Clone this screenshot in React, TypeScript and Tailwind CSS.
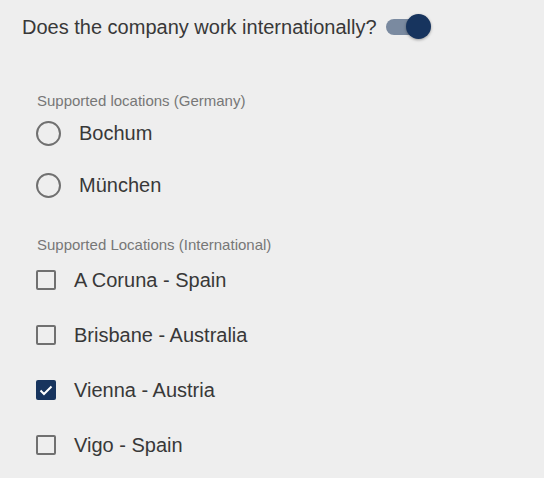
import { useState } from 'react'

const germany = ['Bochum', 'München']
const international = [
  { id: 'coruna', label: 'A Coruna - Spain' },
  { id: 'brisbane', label: 'Brisbane - Australia' },
  { id: 'vienna', label: 'Vienna - Austria' },
  { id: 'vigo', label: 'Vigo - Spain' },
]

function Radio({ checked }: { checked: boolean }) {
  return (
    <span className="flex h-[25px] w-[25px] items-center justify-center rounded-full border-2 border-[#707070]">
      {checked && <span className="h-3 w-3 rounded-full bg-[#17345e]" />}
    </span>
  )
}

function Checkbox({ checked }: { checked: boolean }) {
  if (checked) {
    return (
      <span className="flex h-[20px] w-[20px] items-center justify-center rounded-[2px] bg-[#17345e]">
        <svg viewBox="0 0 20 20" className="h-[20px] w-[20px]" fill="none" stroke="white" strokeWidth="2">
          <path d="M4.5 10.5L8 14l7.5-7.5" />
        </svg>
      </span>
    )
  }
  return <span className="block h-[20px] w-[20px] rounded-[2px] border-2 border-[#707070]" />
}

export default function App() {
  const [international_, setInternational] = useState(true)
  const [city, setCity] = useState<string | null>(null)
  const [selected, setSelected] = useState<string[]>(['vienna'])

  const toggle = (id: string) =>
    setSelected((s) => (s.includes(id) ? s.filter((x) => x !== id) : [...s, id]))

  return (
    <div className="min-h-[478px] bg-[#eeeeee] font-['Liberation_Sans',Arial,sans-serif] text-[#383838]">
      <div className="flex items-center gap-[9px] pl-[22px] pt-[14px]">
        <span className="text-[20px] leading-[26px]">Does the company work internationally?</span>
        <button
          onClick={() => setInternational(!international_)}
          className="relative h-[26px] w-[46px]"
        >
          <span className="absolute left-0 top-[5px] h-[16px] w-[34px] rounded-full bg-[#7a8aa0]" />
          <span
            className={
              'absolute top-0 h-[25px] w-[25px] rounded-full bg-[#17345e] shadow-[0_1px_3px_rgba(0,0,0,0.35)] ' +
              (international_ ? 'left-[20px]' : 'left-0')
            }
          />
        </button>
      </div>

      <div className="pl-[37px] pt-[52px]">
        <div className="text-[15px] leading-[18px] text-[#777777]">Supported locations (Germany)</div>
        <div className="flex flex-col gap-[6px]">
          {germany.map((c) => (
            <label key={c} className="flex h-[46px] cursor-pointer items-center gap-[18px]" onClick={() => setCity(c)}>
              <span className="-ml-[1px] shrink-0">
                <Radio checked={city === c} />
              </span>
              <span className="text-[20px]">{c}</span>
            </label>
          ))}
        </div>

        <div className="mt-[28px] text-[15px] leading-[18px] text-[#777777]">Supported Locations (International)</div>
        <div className="flex flex-col gap-[3px]">
          {international.map((l) => (
            <label key={l.id} className="flex h-[52px] cursor-pointer items-center gap-[18px]" onClick={() => toggle(l.id)}>
              <span className="-ml-[1px] shrink-0">
                <Checkbox checked={selected.includes(l.id)} />
              </span>
              <span className="text-[20px]">{l.label}</span>
            </label>
          ))}
        </div>
      </div>
    </div>
  )
}
